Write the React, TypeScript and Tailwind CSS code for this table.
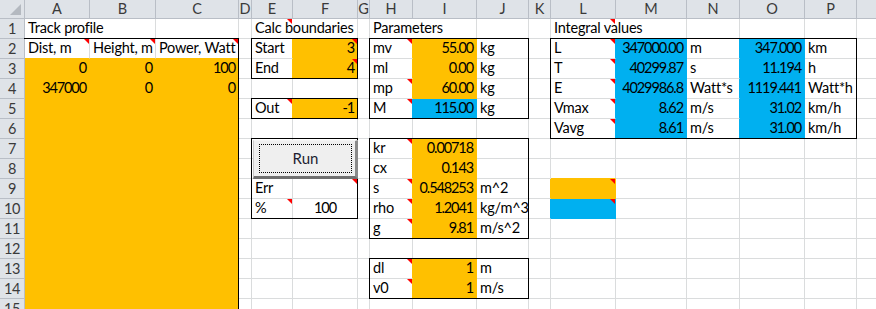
import React from "react";

// Column letters of the worksheet, A..Q
const COLS = ["A", "B", "C", "D", "E", "F", "G", "H", "I", "J", "K", "L", "M", "N", "O", "P", "Q"];
const ROWS = [1, 2, 3, 4, 5, 6, 7, 8, 9, 10, 11, 12, 13, 14, 15];

// same track sizes for the cell layer and the overlay layer
const TRACKS =
  "grid grid-cols-[25px_65px_66px_83px_13px_41px_65px_12px_43px_64px_52px_22px_65px_71px_53px_65px_52px_64px] grid-rows-[19px_repeat(15,20px)]";

type Fill = "o" | "b";
type Cell = { v?: string; a?: "r" | "c"; fill?: Fill };

const cells: Record<string, Cell> = {
  A1: { v: "Track profile" },
  E1: { v: "Calc boundaries" },
  H1: { v: "Parameters" },
  L1: { v: "Integral values" },

  A2: { v: "Dist, m" },
  B2: { v: "Height, m" },
  C2: { v: "Power, Watt" },
  E2: { v: "Start" },
  F2: { v: "3", a: "r", fill: "o" },
  H2: { v: "mv" },
  I2: { v: "55.00", a: "r", fill: "o" },
  J2: { v: "kg" },
  L2: { v: "L" },
  M2: { v: "347000.00", a: "r", fill: "b" },
  N2: { v: "m" },
  O2: { v: "347.000", a: "r", fill: "b" },
  P2: { v: "km" },

  A3: { v: "0", a: "r" },
  B3: { v: "0", a: "r" },
  C3: { v: "100", a: "r" },
  E3: { v: "End" },
  F3: { v: "4", a: "r", fill: "o" },
  H3: { v: "ml" },
  I3: { v: "0.00", a: "r", fill: "o" },
  J3: { v: "kg" },
  L3: { v: "T" },
  M3: { v: "40299.87", a: "r", fill: "b" },
  N3: { v: "s" },
  O3: { v: "11.194", a: "r", fill: "b" },
  P3: { v: "h" },

  A4: { v: "347000", a: "r" },
  B4: { v: "0", a: "r" },
  C4: { v: "0", a: "r" },
  H4: { v: "mp" },
  I4: { v: "60.00", a: "r", fill: "o" },
  J4: { v: "kg" },
  L4: { v: "E" },
  M4: { v: "4029986.8", a: "r", fill: "b" },
  N4: { v: "Watt*s" },
  O4: { v: "1119.441", a: "r", fill: "b" },
  P4: { v: "Watt*h" },

  E5: { v: "Out" },
  F5: { v: "-1", a: "r", fill: "o" },
  H5: { v: "M" },
  I5: { v: "115.00", a: "r", fill: "b" },
  J5: { v: "kg" },
  L5: { v: "Vmax" },
  M5: { v: "8.62", a: "r", fill: "b" },
  N5: { v: "m/s" },
  O5: { v: "31.02", a: "r", fill: "b" },
  P5: { v: "km/h" },

  L6: { v: "Vavg" },
  M6: { v: "8.61", a: "r", fill: "b" },
  N6: { v: "m/s" },
  O6: { v: "31.00", a: "r", fill: "b" },
  P6: { v: "km/h" },

  H7: { v: "kr" },
  I7: { v: "0.00718", a: "r", fill: "o" },
  H8: { v: "cx" },
  I8: { v: "0.143", a: "r", fill: "o" },
  E9: { v: "Err" },
  H9: { v: "s" },
  I9: { v: "0.548253", a: "r", fill: "o" },
  J9: { v: "m^2" },
  L9: { fill: "o" },
  E10: { v: "%" },
  F10: { v: "100", a: "c" },
  H10: { v: "rho" },
  I10: { v: "1.2041", a: "r", fill: "o" },
  J10: { v: "kg/m^3" },
  L10: { fill: "b" },
  H11: { v: "g" },
  I11: { v: "9.81", a: "r", fill: "o" },
  J11: { v: "m/s^2" },
  H13: { v: "dl" },
  I13: { v: "1", a: "r", fill: "o" },
  J13: { v: "m" },
  H14: { v: "v0" },
  I14: { v: "1", a: "r", fill: "o" },
  J14: { v: "m/s" },
};

// cells carrying a note marker
const notes = new Set([
  "A2", "B2", "C2", "E1", "F2", "F3", "E5", "F9", "E10",
  "H2", "H4", "H5", "H7", "H9", "H10", "H11", "H13", "H14",
  "L1", "L2", "L3", "L4", "L5", "L6", "L9", "L10",
]);

// text spilling into the next column hides that gridline
const spill = new Set(["A1", "E1", "H1", "L1"]);

function fillOf(col: number, row: number): Fill | undefined {
  if (col <= 2 && row >= 3) return "o";
  const c = cells[`${COLS[col]}${row}`];
  return c?.fill;
}

const bgCls = { o: "bg-[#ffc000]", b: "bg-[#00b0f0]" };
const rCls = { o: "border-r-[#ffc000]", b: "border-r-[#00b0f0]" };
const bCls = { o: "border-b-[#ffc000]", b: "border-b-[#00b0f0]" };

function SheetCell({ col, row }: { col: number; row: number }) {
  const id = `${COLS[col]}${row}`;
  const cell = cells[id];
  const fill = fillOf(col, row);
  const right = fill ?? fillOf(col + 1, row);
  const below = fill ?? fillOf(col, row + 1);
  const rc = spill.has(id) ? "border-r-white" : right ? rCls[right] : "border-r-[#dadcdd]";
  const bc = below ? bCls[below] : "border-b-[#dadcdd]";
  const numeric = cell?.a === "r" || cell?.a === "c";
  const justify = cell?.a === "r" ? "justify-end" : cell?.a === "c" ? "justify-center" : "justify-start";

  return (
    <div className={`relative flex items-end border-r border-b ${rc} ${bc} ${fill ? bgCls[fill] : ""} ${justify}`}>
      {cell?.v && (
        <span
          className={`relative z-[5] whitespace-nowrap pb-[1px] leading-[18px] ${
            numeric ? "pl-[3px] pr-[3px] tracking-[-1.1px]" : "px-[3px] tracking-[-0.2px]"
          }`}
        >
          {cell.v}
        </span>
      )}
      {notes.has(id) && (
        <span className="absolute right-0 top-0 z-[6] h-0 w-0 border-l-[5px] border-t-[5px] border-l-transparent border-t-[#ff0000]" />
      )}
    </div>
  );
}

// outlined blocks drawn over the grid
const boxes = [
  "col-start-2 col-end-5 row-start-3 row-end-17 border-t border-r",
  "col-start-6 col-end-8 row-start-3 row-end-5 border",
  "col-start-6 col-end-8 row-start-6 row-end-7 border",
  "col-start-6 col-end-8 row-start-8 row-end-12 border",
  "col-start-9 col-end-12 row-start-3 row-end-7 border",
  "col-start-9 col-end-12 row-start-8 row-end-13 border",
  "col-start-9 col-end-12 row-start-14 row-end-16 border",
  "col-start-13 col-end-18 row-start-3 row-end-8 border",
];

export default function App() {
  return (
    <div className="grid h-[309px] w-[876px] overflow-hidden bg-white text-[14.5px] text-black [font-family:Lato,'Liberation_Sans',sans-serif]">
      <div className={`col-start-1 row-start-1 ${TRACKS}`}>
        {/* corner */}
        <div className="flex items-end justify-end border-b border-r border-[#b9bec6] bg-[#dfe3e8] p-[3px]">
          <svg width="11" height="11" viewBox="0 0 11 11">
            <path d="M11 0 L11 11 L0 11 Z" fill="#b4b9c0" />
          </svg>
        </div>
        {COLS.map((c, i) => (
          <div
            key={c}
            className="flex items-center justify-center border-b border-r border-[#b9bec6] bg-[#dfe3e8] text-[#3a3a3a]"
          >
            {i < 16 ? c : ""}
          </div>
        ))}

        {ROWS.map((r) => (
          <React.Fragment key={r}>
            <div className="flex items-center justify-center border-b border-r border-[#b9bec6] bg-[#dfe3e8] text-[#3a3a3a] tracking-[-0.5px]">
              {r}
            </div>
            {COLS.map((_, ci) => (
              <SheetCell key={ci} col={ci} row={r} />
            ))}
          </React.Fragment>
        ))}
      </div>

      <div className={`pointer-events-none z-10 col-start-1 row-start-1 ${TRACKS}`}>
        {boxes.map((b) => (
          <div key={b} className={`-ml-px -mt-px border-black ${b}`} />
        ))}

        {/* macro button over E7:F8 */}
        <div className="col-start-6 col-end-8 row-start-8 row-end-10 ml-px mt-px flex border-b-[3px] border-l border-r-[3px] border-t border-b-[#707070] border-l-[#c8c8c8] border-r-[#8a8a8a] border-t-[#f4f4f4] bg-[#efefef] p-[3px] pl-[5px]">
          <div className="flex flex-1 items-center justify-center border border-dotted border-black text-[15px] text-[#1c1c30]">
            Run
          </div>
        </div>
      </div>
    </div>
  );
}
